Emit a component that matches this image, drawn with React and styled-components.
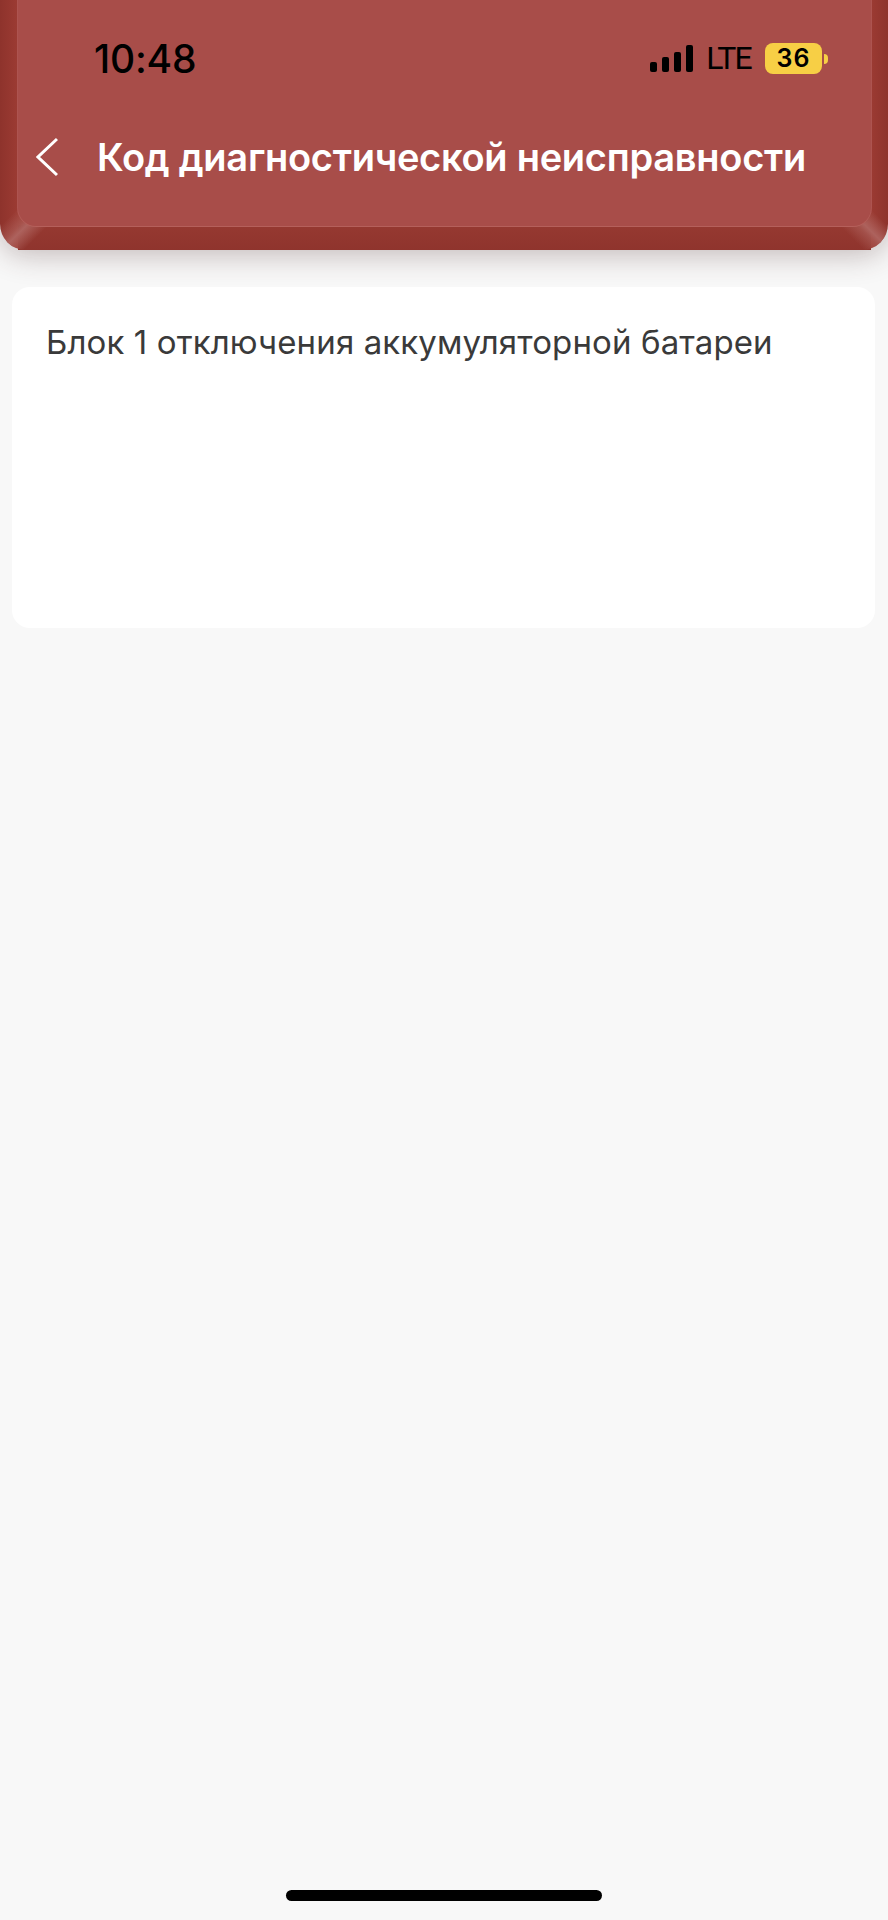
import React from 'react';
import styled, { createGlobalStyle } from 'styled-components';

const GlobalStyle = createGlobalStyle`
  html, body {
    margin: 0;
    padding: 0;
    background: #f8f8f8;
  }
  * {
    box-sizing: border-box;
  }
`;

const Page = styled.div`
  position: relative;
  width: 888px;
  height: 1920px;
  overflow: hidden;
  background: #f8f8f8;
  font-family: Inter, 'Noto Sans', sans-serif;
`;

const Header = styled.header`
  position: relative;
  height: 250px;
  padding: 0 17px 24px 18px;
  border-radius: 0 0 26px 26px;
  background: linear-gradient(90deg, #8e332c 0, #9c3b33 18px, #9c3b33 870px, #8e332c 100%);
  box-shadow: 0 4px 30px rgba(70, 40, 40, 0.32);
`;

const BottomEdge = styled.div`
  position: absolute;
  left: 18px;
  right: 17px;
  bottom: 0;
  height: 25px;
  background: linear-gradient(180deg, #963931, #8f342d);
`;

const Corner = styled.div`
  position: absolute;
  bottom: 0;
  width: 46px;
  height: 46px;
  ${({ $side }) => ($side === 'left'
    ? `left: 0;
       border-bottom-left-radius: 26px;
       background: linear-gradient(135deg, transparent 24%, #b0666188 44%, #ad625d 52%, transparent 76%);`
    : `right: 0;
       border-bottom-right-radius: 26px;
       background: linear-gradient(45deg, transparent 24%, #b0666188 44%, #ad625d 52%, transparent 76%);`)}
`;

const Face = styled.div`
  position: relative;
  height: 100%;
  display: flex;
  flex-direction: column;
  background: #a84d49;
  border-radius: 0 0 18px 18px;
  box-shadow: 0 1px 0 #b5605b, 1px 0 0 #ad5450, -1px 0 0 #ad5450;
`;

const StatusBar = styled.div`
  display: flex;
  align-items: center;
  justify-content: space-between;
  height: 40px;
  margin-top: 38px;
  padding: 0 49px 0 76px;
`;

const Clock = styled.span`
  font-size: 39px;
  font-weight: 500;
  letter-spacing: -0.2px;
  color: #000;
`;

const StatusIcons = styled.div`
  display: flex;
  align-items: center;
`;

const Network = styled.span`
  margin: 0 14px 0 13px;
  font-family: Roboto, sans-serif;
  font-size: 32px;
  letter-spacing: -1.8px;
  color: #000;
`;

const Battery = styled.div`
  position: relative;
  width: 57px;
  height: 31px;
  display: flex;
  align-items: center;
  justify-content: center;
  border-radius: 8px;
  background: #f7cf45;
  font-size: 25px;
  font-weight: 600;
  letter-spacing: 1px;
  color: #000;
  &::after {
    content: '';
    position: absolute;
    right: -6px;
    top: 11px;
    width: 4px;
    height: 10px;
    border-radius: 0 5px 5px 0;
    background: #f7cf45;
  }
`;

const NavBar = styled.div`
  display: flex;
  align-items: center;
  height: 60px;
  margin-top: 49px;
  padding-left: 18px;
`;

const BackButton = styled.button`
  display: flex;
  width: 61px;
  padding: 0;
  border: 0;
  background: none;
`;

const Title = styled.h1`
  margin: 0;
  font-size: 38px;
  font-weight: 600;
  letter-spacing: -0.27px;
  white-space: nowrap;
  color: #fff;
`;

const Content = styled.main`
  padding: 37px 13px 0 12px;
`;

const Card = styled.section`
  height: 341px;
  padding: 33px 34px;
  border-radius: 18px;
  background: #fff;
  font-size: 33px;
  letter-spacing: 0.12px;
  line-height: 44px;
  color: #3a3a3a;
`;

const HomeIndicator = styled.div`
  position: absolute;
  left: 286px;
  bottom: 19px;
  width: 316px;
  height: 11px;
  border-radius: 6px;
  background: #000;
`;

const SignalIcon = () => (
  <svg width="43" height="27" viewBox="0 0 43 27" fill="#000">
    <rect x="0" y="17" width="7" height="10" rx="2" />
    <rect x="12" y="12" width="7" height="15" rx="2" />
    <rect x="24" y="7" width="7" height="20" rx="2" />
    <rect x="36" y="0" width="7" height="27" rx="2" />
  </svg>
);

const BackIcon = () => (
  <svg width="22" height="40" viewBox="0 0 22 40" fill="none" stroke="#fff" strokeWidth="3">
    <path d="M21 2 L2 20 L21 38" />
  </svg>
);

const App = () => (
  <Page>
    <GlobalStyle />
    <Header>
      <BottomEdge />
      <Corner $side="left" />
      <Corner $side="right" />
      <Face>
        <StatusBar>
          <Clock>10:48</Clock>
          <StatusIcons>
            <SignalIcon />
            <Network>LTE</Network>
            <Battery>36</Battery>
          </StatusIcons>
        </StatusBar>
        <NavBar>
          <BackButton>
            <BackIcon />
          </BackButton>
          <Title>Код диагностической неисправности</Title>
        </NavBar>
      </Face>
    </Header>
    <Content>
      <Card>Блок 1 отключения аккумуляторной батареи</Card>
    </Content>
    <HomeIndicator />
  </Page>
);

export default App;
